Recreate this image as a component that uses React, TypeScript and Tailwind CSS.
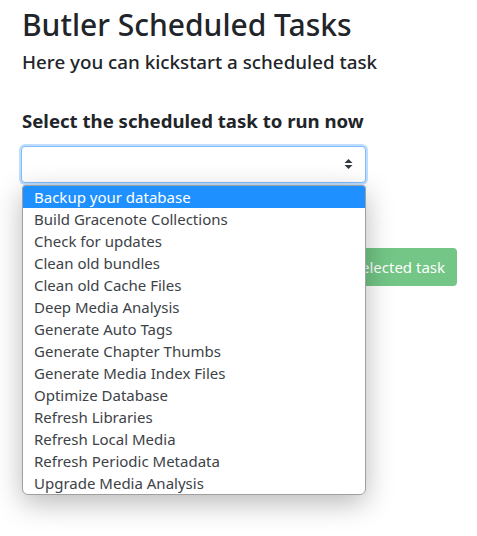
const tasks = [
  "Backup your database",
  "Build Gracenote Collections",
  "Check for updates",
  "Clean old bundles",
  "Clean old Cache Files",
  "Deep Media Analysis",
  "Generate Auto Tags",
  "Generate Chapter Thumbs",
  "Generate Media Index Files",
  "Optimize Database",
  "Refresh Libraries",
  "Refresh Local Media",
  "Refresh Periodic Metadata",
  "Upgrade Media Analysis",
];

function SortArrows() {
  return (
    <svg width="9" height="10" viewBox="0 0 9 10" className="text-[#343a40]">
      <path d="M4.5 0 L8.5 4 L0.5 4 Z" fill="currentColor" />
      <path d="M4.5 10 L8.5 6 L0.5 6 Z" fill="currentColor" />
    </svg>
  );
}

export default function App() {
  const font = { fontFamily: '"Noto Sans", "Open Sans", sans-serif' };
  return (
    <div className="min-h-[536px] bg-white text-[#212529] pl-[22px] pr-[20px]" style={font}>
      <h2 className="pt-[7px] text-[30px] font-medium leading-[1.2]">Butler Scheduled Tasks</h2>
      <h5 className="mt-[8px] text-[18.8px] font-medium leading-[1.2]">Here you can kickstart a scheduled task</h5>

      <div className="mt-[36px] w-[345px]">
        <label className="block whitespace-nowrap text-[18.6px] font-bold leading-[1.2] mb-[14px]">
          Select the scheduled task to run now
        </label>
        <div className="relative">
          <div className="h-[37px] w-[345px] -ml-[1px] rounded-[4px] border border-[#80bdff] bg-white shadow-[0_0_0_2px_rgba(0,123,255,0.25)] flex items-center justify-end pr-[12px]">
            <SortArrows />
          </div>
          <ul className="absolute left-0 top-[39px] w-[344px] z-10 bg-white border border-[#a0a0a0] rounded-t-[3px] rounded-b-[6px] overflow-hidden shadow-[0_8px_28px_rgba(0,0,0,0.28)]">
            {tasks.map((t, i) => (
              <li
                key={t}
                className={
                  i === 0
                    ? "h-[22px] leading-[22px] pl-[11px] text-[15px] bg-[#1e90ff] text-white"
                    : "h-[22px] leading-[22px] pl-[11px] text-[15px] text-[#3d4247]"
                }
              >
                {t}
              </li>
            ))}
          </ul>
        </div>
      </div>

      <div className="flex justify-end mt-[65px]">
        <button className="h-[38px] px-[12px] rounded-[4px] bg-[#73c686] text-white text-[15px] leading-[38px]">
          Run selected task
        </button>
      </div>
    </div>
  );
}
